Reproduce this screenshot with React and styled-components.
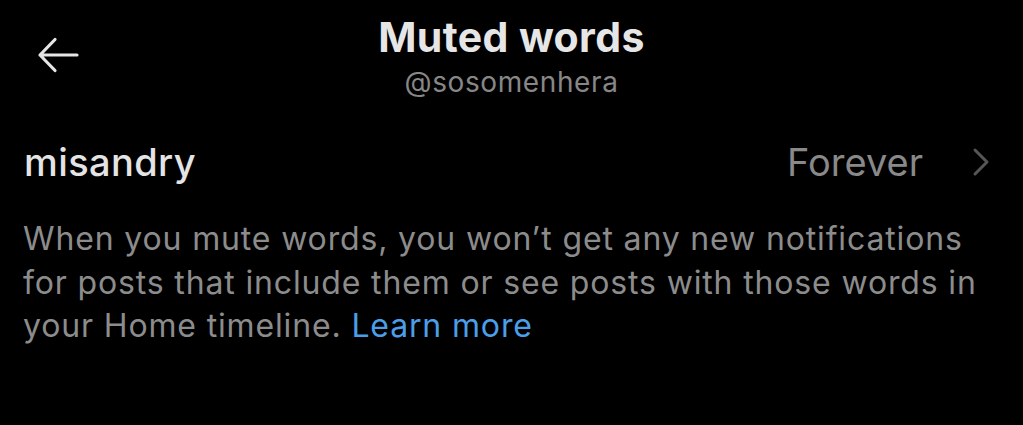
import React from 'react'
import styled, { createGlobalStyle } from 'styled-components';

const GlobalStyle = createGlobalStyle`
  html, body {
    margin: 0;
    background: #000;
  }
  body {
    font-family: 'Inter', 'Roboto', sans-serif;
  }
`;

function BackArrow() {
  return (
    <svg width="44" height="38" viewBox="0 0 44 38" fill="none">
      <path
        d="M41 19H4M19 3.5L4 19L19 34.5"
        stroke="#e6e6e6"
        strokeWidth="3.2"
        strokeLinecap="round"
        strokeLinejoin="round"
      />
    </svg>
  )
}

function Chevron() {
  return (
    <svg width="20" height="30" viewBox="0 0 20 30" fill="none">
      <path
        d="M4 3L16 15L4 27"
        stroke="#565656"
        strokeWidth="3"
        strokeLinecap="round"
        strokeLinejoin="round"
      />
    </svg>
  )
}

export default function App() {
  return (
    <>
      <GlobalStyle />
      <Page>
        <Header>
          <BackButton><BackArrow /></BackButton>
          <TitleBlock>
            <Title>Muted words</Title>
            <Handle>@sosomenhera</Handle>
          </TitleBlock>
        </Header>
        <WordRow>
          <Word>misandry</Word>
          <Duration>
            Forever
            <Chevron />
          </Duration>
        </WordRow>
        <Description>
          When you mute words, you won’t get any new notifications for posts that
          include them or see posts with those words in your Home timeline.{' '}
          <Link>Learn more</Link>
        </Description>
      </Page>
    </>
  )
}

// ====================
// Styled Components
// ====================

const Page = styled.div`
  width: 1023px;
  height: 425px;
  background: #000;
  overflow: hidden;
`;

const Header = styled.div`
  position: relative;
  display: flex;
  justify-content: center;
  padding-top: 13px;
`;

const BackButton = styled.div`
  position: absolute;
  left: 36px;
  top: 36px;
  display: flex;
`;

const TitleBlock = styled.div`
  display: flex;
  flex-direction: column;
  align-items: center;
`;

const Title = styled.div`
  color: #e6e6e6;
  font-size: 41px;
  font-weight: 700;
  line-height: 48px;
  letter-spacing: 0.4px;
`;

const Handle = styled.div`
  margin-top: 5px;
  color: #878787;
  font-size: 28px;
  line-height: 32px;
  letter-spacing: 0.6px;
`;

const WordRow = styled.div`
  display: flex;
  align-items: center;
  justify-content: space-between;
  padding: 41px 32px 0 24px;
`;

const Word = styled.div`
  color: #e4e4e4;
  font-size: 38px;
  font-weight: 500;
  line-height: 46px;
  letter-spacing: 0.4px;
`;

const Duration = styled.div`
  display: flex;
  align-items: center;
  gap: 48px;
  color: #898989;
  font-size: 38px;
  line-height: 46px;
`;

const Description = styled.p`
  margin: 32px 0 0 23px;
  width: 970px;
  color: #8c8c8c;
  font-size: 32px;
  line-height: 43.5px;
  letter-spacing: 0.85px;
`;

const Link = styled.span`
  color: #4b9fe8;
`;
